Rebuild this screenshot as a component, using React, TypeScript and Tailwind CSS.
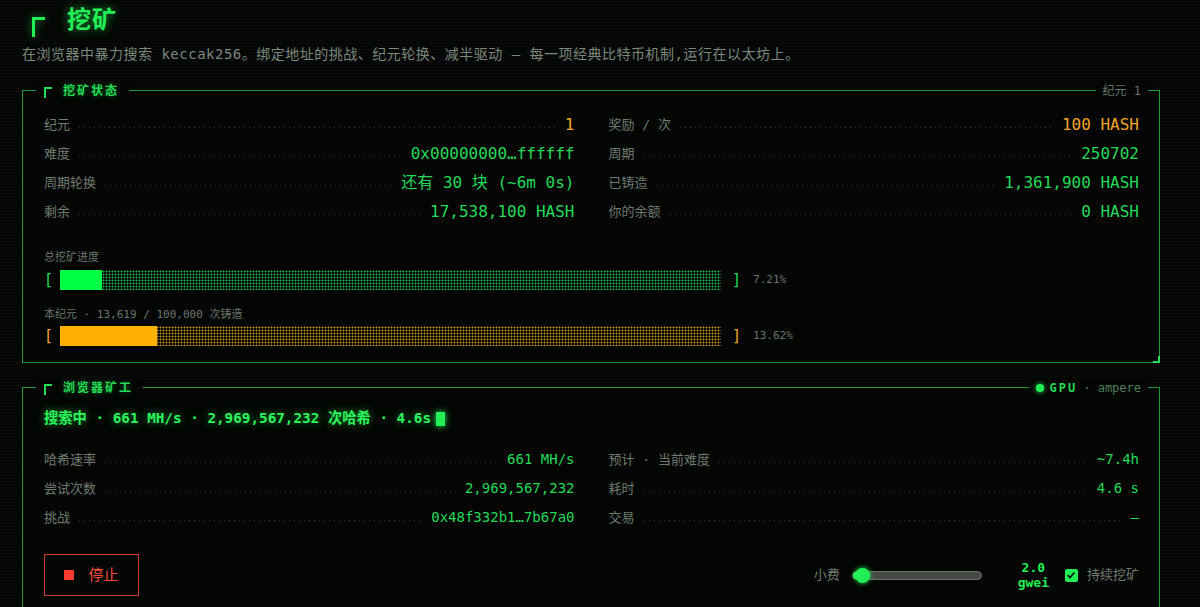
import React from "react";

const MONO = "font-['DejaVu_Sans_Mono','Noto_Sans_CJK_SC',monospace]";

type Tone = "green" | "orange";

const toneClass: Record<Tone, string> = {
  green: "text-[#25d95a]",
  orange: "text-[#f2a526]",
};

const Row = ({
  label,
  value,
  tone = "green",
  size = "text-[16px]",
}: {
  label: string;
  value: string;
  tone?: Tone;
  size?: string;
}) => (
  <div className="flex items-center h-[29px]">
    <span className="text-[13px] text-[#6f7b6f] shrink-0 whitespace-pre">{label}</span>
    <span className="flex-1 mx-[9px] mt-[6px] h-px bg-[linear-gradient(to_right,#2c382c_1px,transparent_1px)] bg-[length:5px_1px] bg-repeat-x" />
    <span className={`${size} ${toneClass[tone]} shrink-0 whitespace-pre`}>{value}</span>
  </div>
);

const Corner = ({ big = false }: { big?: boolean }) =>
  big ? (
    <span className="block w-[13px] h-[20px] border-l-[3px] border-t-[3px] border-[#22ee55] [filter:drop-shadow(0_0_4px_rgba(34,238,85,0.6))]" />
  ) : (
    <span className="block w-[8px] h-[11px] border-l-2 border-t-2 border-[#22dd55] mt-[3px]" />
  );

const Bar = ({
  fill,
  pct,
  color,
}: {
  fill: string;
  pct: string;
  color: "green" | "orange";
}) => {
  const g = color === "green";
  return (
    <div className="flex items-center h-[20px]">
      <span className={`w-[16px] text-[15px] ${g ? "text-[#22dd55]" : "text-[#f2a526]"}`}>[</span>
      <div
        className={`w-[661px] h-[20px] ${
          g
            ? "bg-[radial-gradient(circle,#22b04a_0.95px,transparent_1.05px)]"
            : "bg-[radial-gradient(circle,#c08a1c_0.95px,transparent_1.05px)]"
        } bg-[length:3px_3px]`}
      >
        <div className={`h-full ${fill} ${g ? "bg-[#00ff44]" : "bg-[#ffb000]"}`} />
      </div>
      <span className={`ml-[11px] text-[15px] ${g ? "text-[#22dd55]" : "text-[#f2a526]"}`}>]</span>
      <span className="ml-[12px] text-[11px] text-[#6a766a]">{pct}</span>
    </div>
  );
};

const Legend = ({ title }: { title: string }) => (
  <div className="flex items-center gap-[11px] bg-[#030503] pl-[8px] pr-[10px] h-[18px]">
    <Corner />
    <span className="text-[12px] font-bold tracking-[2px] text-[#22dd55] [text-shadow:0_0_6px_rgba(34,221,85,0.45)]">
      {title}
    </span>
  </div>
);

export default function App() {
  return (
    <div
      className={`${MONO} min-h-screen bg-[#040704] bg-[repeating-linear-gradient(0deg,#040604_0px,#040604_2px,#070b07_2px,#070b07_3px)] pl-[22px] pr-[40px] pt-[6px] pb-[20px]`}
    >
      {/* Title */}
      <div className="flex items-start h-[28px]">
        <div className="ml-[10px] mt-[11px]">
          <Corner big />
        </div>
        <h1 className="ml-[22px] text-[24px] leading-[28px] font-bold tracking-[1px] text-[#22ee55] [text-shadow:0_0_10px_rgba(34,238,85,0.6)]">
          挖矿
        </h1>
      </div>
      <p className="mt-[10px] text-[14px] leading-[20px] tracking-[0.5px] text-[#7b887b] whitespace-pre">
        在浏览器中暴力搜索 keccak256。绑定地址的挑战、纪元轮换、减半驱动 — 每一项经典比特币机制,运行在以太坊上。
      </p>

      {/* Panel 1 */}
      <section className="mt-[26px] border border-[#1e9a3c] bg-[#030603] relative">
        <div className="-mt-[9px] flex items-center justify-between pl-[13px] pr-[11px]">
          <Legend title="挖矿状态" />
          <span className="bg-[#030503] px-[7px] h-[18px] flex items-center text-[12px] text-[#6a766a]">
            纪元 1
          </span>
        </div>

        <div className="pl-[21px] pr-[20px]">
          <div className="mt-[10px] grid grid-cols-2 gap-x-[34px]">
            <Row label="纪元" value="1" tone="orange" />
            <Row label="奖励 / 次" value="100 HASH" tone="orange" />
            <Row label="难度" value="0x00000000…ffffff" />
            <Row label="周期" value="250702" />
            <Row label="周期轮换" value="还有 30 块 (~6m 0s)" />
            <Row label="已铸造" value="1,361,900 HASH" />
            <Row label="剩余" value="17,538,100 HASH" />
            <Row label="你的余额" value="0 HASH" />
          </div>

          <div className="mt-[24px] text-[11px] leading-[15px] text-[#6a766a]">总挖矿进度</div>
          <div className="mt-[5px]">
            <Bar fill="w-[42px]" pct="7.21%" color="green" />
          </div>
          <div className="mt-[17px] text-[11px] leading-[15px] text-[#6a766a] whitespace-pre">
            本纪元 · 13,619 / 100,000 次铸造
          </div>
          <div className="mt-[4px] pb-[16px]">
            <Bar fill="w-[97px]" pct="13.62%" color="orange" />
          </div>
        </div>
        <span className="absolute -right-px -bottom-px w-[7px] h-[7px] border-r-2 border-b-2 border-[#22dd55]" />
      </section>

      {/* Panel 2 */}
      <section className="mt-[24px] border border-[#1e9a3c] bg-[#030603]">
        <div className="-mt-[9px] flex items-center justify-between pl-[13px] pr-[11px]">
          <Legend title="浏览器矿工" />
          <span className="bg-[#030503] px-[7px] h-[18px] flex items-center gap-[6px] text-[12px]">
            <span className="w-[8px] h-[8px] rounded-full bg-[#22ee55] shadow-[0_0_5px_#22ee55]" />
            <span className="font-bold tracking-[2px] text-[#22dd55]">GPU</span>
            <span className="text-[#4f7d55]">· ampere</span>
          </span>
        </div>

        <div className="pl-[21px] pr-[20px] pb-[20px]">
          <div className="mt-[12px] flex items-center h-[20px] text-[14.3px] font-semibold text-[#2bf55c] [text-shadow:0_0_8px_rgba(43,245,92,0.55)]">
            <span className="whitespace-pre">搜索中 · 661 MH/s · 2,969,567,232 次哈希 · 4.6s</span>
            <span className="ml-[5px] w-[9px] h-[14px] bg-[#22ee55] shadow-[0_0_6px_#22ee55]" />
          </div>

          <div className="mt-[16px] grid grid-cols-2 gap-x-[34px]">
            <Row label="哈希速率" value="661 MH/s" size="text-[14px]" />
            <Row label="预计 · 当前难度" value="~7.4h" size="text-[14px]" />
            <Row label="尝试次数" value="2,969,567,232" size="text-[14px]" />
            <Row label="耗时" value="4.6 s" size="text-[14px]" />
            <Row label="挑战" value="0x48f332b1…7b67a0" size="text-[14px]" />
            <Row label="交易" value="—" size="text-[14px]" />
          </div>

          <div className="mt-[22px] flex items-center justify-between">
            <button className="w-[95px] h-[42px] border border-[#d13b35] flex items-center justify-center gap-[14px] text-[15px] text-[#ff4a3c]">
              <span className="w-[10px] h-[10px] bg-[#ff3b30]" />
              <span>停止</span>
            </button>

            <div className="flex items-center">
              <span className="text-[13px] text-[#6f7b6f]">小费</span>
              <div className="ml-[12px] relative w-[130px] h-[9px] rounded-full bg-[#454a45] border border-[#6a6f6a] flex items-center">
                <div className="absolute left-0 top-0 h-full w-[12px] rounded-full bg-[#22ee55]" />
                <div className="absolute left-[2px] w-[15px] h-[15px] rounded-full bg-[#22ee55] shadow-[0_0_5px_#22ee55]" />
              </div>
              <div className="ml-[36px] flex flex-col items-center text-[13px] leading-[15px] font-bold text-[#22ee55]">
                <span>2.0</span>
                <span>gwei</span>
              </div>
              <span className="ml-[16px] w-[13px] h-[13px] rounded-[2px] bg-[#22ee55] flex items-center justify-center">
                <svg viewBox="0 0 12 12" className="w-[10px] h-[10px]">
                  <path d="M2 6.2 4.8 9 10 3" fill="none" stroke="#041004" strokeWidth="2" />
                </svg>
              </span>
              <span className="ml-[9px] text-[13px] text-[#6f7b6f]">持续挖矿</span>
            </div>
          </div>
        </div>
      </section>
    </div>
  );
}
